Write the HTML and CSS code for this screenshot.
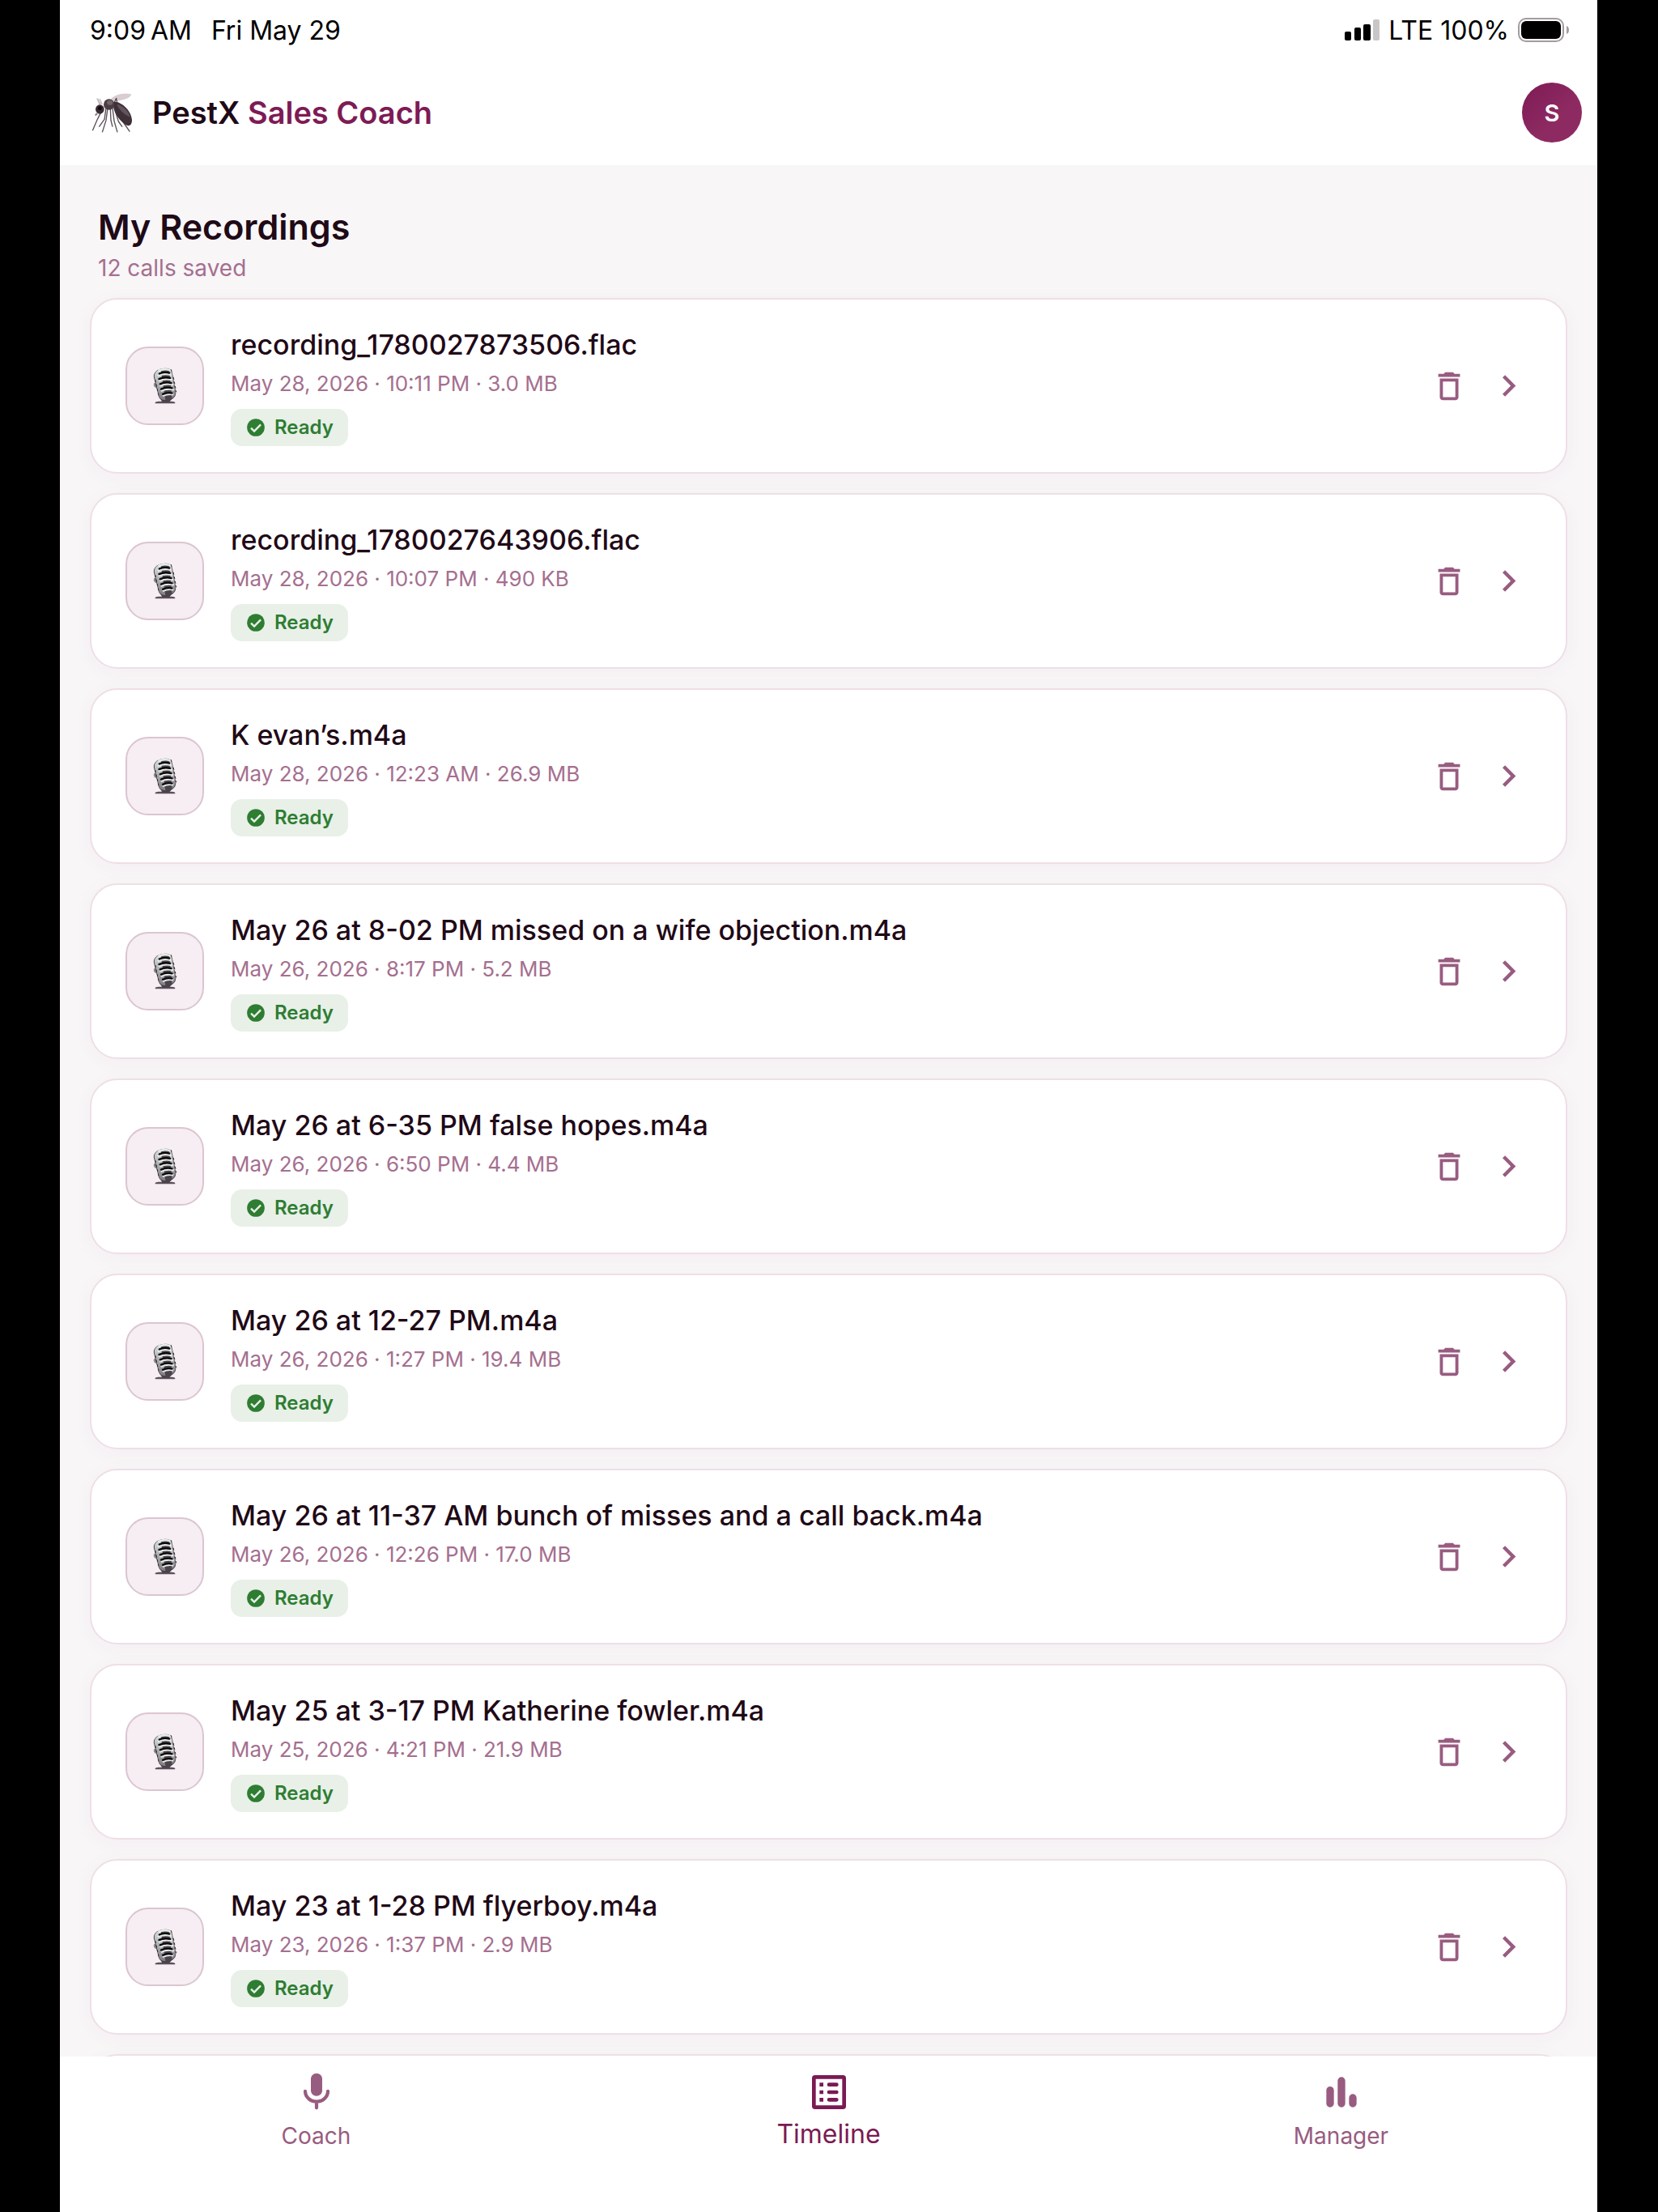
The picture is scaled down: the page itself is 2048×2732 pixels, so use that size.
FILE: index.html
```html
<!DOCTYPE html>
<html lang="en">
  <head>
    <meta charset="UTF-8" />
    <meta name="viewport" content="width=device-width, initial-scale=1.0" />
    <title>PestX Sales Coach</title>
    <link rel="stylesheet" href="styles.css">
  </head>
  <body>
    <!-- shared icons -->
    <svg class="sprite" aria-hidden="true">
      <linearGradient id="metal" x1="0" y1="0" x2="0" y2="1">
        <stop offset="0" stop-color="#d6dfdb" />
        <stop offset="1" stop-color="#817c84" />
      </linearGradient>
      <symbol id="icon-studio-mic" viewBox="0 0 90 140">
        <path d="M8 132q0-5 12-5h50q12 0 12 5v3H8z" fill="#5c4f59" />
        <path d="M24 110l10 20h26l14-16z" fill="#4b434a" />
        <path d="M4 58q-5 8 2 16l12 6-2-24z" fill="#8b8a8e" />
        <path d="M2 36C0 14 22 2 46 2q22 0 26 18l13 70c3 18-10 32-32 35-20 2-31-6-34-22z" fill="#4a434a" />
        <path d="M5 36C3 18 18 7 28 6l18 116c-16 0-23-8-25-20z" fill="url(#metal)" />
        <path d="M60 5q8 4 10 16l13 69c2 12-4 20-12 26z" fill="url(#metal)" />
        <path d="M20 13q22-12 46-2M17 31q22-12 52-4M20 50q25-12 52-4M24 69q25-12 52-4M29 88q25-12 49-4M35 106q23-10 41-5" fill="none" stroke="#e4ece7" stroke-width="8" />
        <path d="M23 23q16-9 38-3M22 43q18-9 42-4M26 62q18-9 42-4M30 81q18-9 41-4M36 100q16-8 35-4" fill="none" stroke="#0d080c" stroke-width="7" stroke-linecap="round" />
        <path d="M8 46l14 65M76 36l11 56M66 6l4 8" fill="none" stroke="#30282f" stroke-width="3" stroke-dasharray="9 8" />
      </symbol>
      <symbol id="icon-check" viewBox="0 0 24 24">
        <circle cx="12" cy="12" r="10" fill="currentColor" />
        <path d="M6.5 12.5l3.7 3.7 7.4-7.6" fill="none" stroke="#e8f0e8" stroke-width="2.2" />
      </symbol>
      <symbol id="icon-trash" viewBox="0 0 24 24">
        <path fill="currentColor" d="M6 19c0 1.100.9 2 2 2h8c1.100 0 2-.9 2-2V7H6v12zM8 9h8v10H8V9zm7.500-5l-1-1h-5l-1 1H5v2h14V4z" />
      </symbol>
      <symbol id="icon-chevron" viewBox="0 0 24 24">
        <path fill="currentColor" d="M10 6L8.590 7.410 13.170 12l-4.580 4.590L10 18l6-6z" />
      </symbol>
    </svg>

    <div class="app">
      <div class="status-bar">
        <div class="status-left">
          <span>9:09&thinsp;AM</span>
          <span>Fri May 29</span>
        </div>
        <div class="status-right">
          <svg class="signal" viewBox="0 0 43 26" aria-hidden="true">
            <rect x="0" y="15" width="8" height="11" rx="2" />
            <rect x="12" y="10" width="8" height="16" rx="2" />
            <rect x="23" y="6" width="9" height="20" rx="2" />
            <rect x="35" y="0" width="8" height="26" rx="2" fill="#c9c6c8" />
          </svg>
          <span>LTE 100%</span>
          <svg class="battery" viewBox="0 0 64 30" aria-hidden="true">
            <rect x="1" y="1" width="55" height="28" rx="9" fill="none" stroke="#a39ca0" stroke-width="2" />
            <rect x="4" y="4" width="49" height="22" rx="6" />
            <path d="M60 10q3 1 3 5t-3 5z" fill="#a39ca0" />
          </svg>
        </div>
      </div>

      <header class="header">
        <svg class="logo" viewBox="38 72 153 150" role="img" aria-label="Mosquito">
          <path d="M104 104C120 78 160 72 186 79c-2 16-38 26-66 25z" fill="#d9cdd3" />
          <path d="M66 118L56 94l8 2 10 20zM74 116l-8-22 6 4 8 20z" fill="#c6bcc1" />
          <g fill="none" stroke="#5b4d55" stroke-width="4" stroke-linejoin="round">
            <path d="M72 148L60 172 42 214" />
            <path d="M92 130L86 172 66 200" />
            <path d="M98 130L92 176 78 220" />
            <path d="M108 132l2 44 6 24" />
            <path d="M116 130l6 48 12 42" />
            <path d="M122 128l16 52 14 20" />
            <path d="M128 130l26 50 26 38" />
            <path d="M122 112l8-18 4 24" />
          </g>
          <path d="M118 108c26-6 68 30 70 66 0 24-14 26-28 15-24-18-44-50-42-81z" fill="#3d3037" />
          <path d="M132 116c18 2 44 24 50 48-20-8-42-26-50-48z" fill="#63535c" />
          <ellipse cx="103" cy="117" rx="20" ry="20" fill="#4a3d44" />
          <ellipse cx="106" cy="110" rx="11" ry="9" fill="#73646c" />
          <ellipse cx="69" cy="135" rx="16" ry="17" fill="#372b32" />
          <circle cx="69" cy="131" r="7" fill="#15090f" />
          <path d="M56 148l-6 8 4 4 8-8z" fill="#8f8189" />
        </svg>
        <h1 class="brand">PestX <span class="brand-accent">Sales Coach</span></h1>
        <button type="button" class="avatar" aria-label="Account">S</button>
      </header>

      <main class="content">
        <div class="page-title">
          <h2>My Recordings</h2>
          <p>12 calls saved</p>
        </div>
        <ul class="recordings" id="recordings"></ul>
      </main>

      <nav class="tab-bar">
        <a href="#coach" class="tab">
          <svg viewBox="0 0 24 24" aria-hidden="true">
            <path fill="currentColor" d="M12 14c1.660 0 3-1.340 3-3V5c0-1.660-1.340-3-3-3S9 3.340 9 5v6c0 1.660 1.340 3 3 3z" />
            <path d="M6 11.500a6 5.500 0 0 0 12 0M12 17v3.300" fill="none" stroke="currentColor" stroke-width="1.800" stroke-linecap="round" />
          </svg>
          <span>Coach</span>
        </a>
        <a href="#timeline" class="tab active">
          <svg viewBox="0 0 24 24" aria-hidden="true">
            <rect x="4" y="4" width="16" height="16" rx=".6" fill="none" stroke="currentColor" stroke-width="2" />
            <path d="M7 8h2M7 12h2M7 16h2" stroke="currentColor" stroke-width="2" />
            <path d="M12 8h4M12 12h4M12 16h4" stroke="currentColor" stroke-width="2" stroke-linecap="round" />
          </svg>
          <span>Timeline</span>
        </a>
        <a href="#manager" class="tab">
          <svg viewBox="0 0 24 24" aria-hidden="true">
            <path d="M6 11v7M12 6v12M18 15v3" stroke="currentColor" stroke-width="4" stroke-linecap="round" />
          </svg>
          <span>Manager</span>
        </a>
      </nav>
    </div>

    <script>
      const recordings = [
        { name: "recording_1780027873506.flac", meta: "May 28, 2026 · 10:11 PM · 3.0 MB" },
        { name: "recording_1780027643906.flac", meta: "May 28, 2026 · 10:07 PM · 490 KB" },
        { name: "K evan’s.m4a", meta: "May 28, 2026 · 12:23 AM · 26.9 MB" },
        { name: "May 26 at 8-02 PM missed on a wife objection.m4a", meta: "May 26, 2026 · 8:17 PM · 5.2 MB" },
        { name: "May 26 at 6-35 PM false hopes.m4a", meta: "May 26, 2026 · 6:50 PM · 4.4 MB" },
        { name: "May 26 at 12-27 PM.m4a", meta: "May 26, 2026 · 1:27 PM · 19.4 MB" },
        { name: "May 26 at 11-37 AM bunch of misses and a call back.m4a", meta: "May 26, 2026 · 12:26 PM · 17.0 MB" },
        { name: "May 25 at 3-17 PM Katherine fowler.m4a", meta: "May 25, 2026 · 4:21 PM · 21.9 MB" },
        { name: "May 23 at 1-28 PM flyerboy.m4a", meta: "May 23, 2026 · 1:37 PM · 2.9 MB" },
      ];

      const list = document.getElementById("recordings");

      list.innerHTML = recordings
        .map(
          (rec) => `
          <li class="card">
            <div class="thumb"><svg aria-hidden="true"><use href="#icon-studio-mic" /></svg></div>
            <div class="info">
              <h3>${rec.name}</h3>
              <p>${rec.meta}</p>
              <span class="badge"><svg aria-hidden="true"><use href="#icon-check" /></svg>Ready</span>
            </div>
            <button type="button" class="btn-delete" aria-label="Delete"><svg aria-hidden="true"><use href="#icon-trash" /></svg></button>
            <a href="#recording" class="btn-open" aria-label="Open"><svg aria-hidden="true"><use href="#icon-chevron" /></svg></a>
          </li>`
        )
        .join("");

      list.insertAdjacentHTML("beforeend", '<li class="card"></li>');
    </script>
  </body>
</html>
```
FILE: styles.css
```css
* {
  margin: 0;
  padding: 0;
  box-sizing: border-box;
}

body {
  font-family: Inter, Roboto, "Liberation Sans", sans-serif;
  background: #000;
  color: #1f0a17;
  height: 100vh;
  padding: 0 75px 0 74px;
  overflow: hidden;
}

svg {
  display: block;
  flex-shrink: 0;
}

button {
  border: none;
  background: none;
  font-family: inherit;
  cursor: pointer;
}

a {
  color: inherit;
  text-decoration: none;
}

.sprite {
  position: absolute;
  width: 0;
  height: 0;
}

.app {
  display: flex;
  flex-direction: column;
  height: 100%;
  background: #f8f6f7;
}

/* status bar */
.status-bar {
  display: flex;
  justify-content: space-between;
  align-items: center;
  height: 74px;
  padding: 0 34px 0 37px;
  background: #fff;
  color: #000;
  font-size: 32px;
}

.status-left {
  display: flex;
  gap: 24px;
}

.status-right {
  display: flex;
  align-items: center;
  gap: 11px;
}

.signal {
  width: 43px;
  height: 26px;
}

.battery {
  width: 64px;
  height: 30px;
}

/* header */
.header {
  display: flex;
  align-items: center;
  height: 130px;
  padding: 0 19px 0 39px;
  background: #fff;
}

.logo {
  width: 51px;
  height: 50px;
}

.brand {
  flex: 1;
  margin-left: 24px;
  font-size: 38px;
  line-height: 46px;
  font-weight: 600;
}

.brand-accent {
  color: #7d1b55;
}

.avatar {
  width: 74px;
  height: 74px;
  border-radius: 50%;
  background: linear-gradient(135deg, #7d1b55 0%, #8e2a62 60%);
  color: #fff;
  font-size: 29px;
  font-weight: 600;
}

/* recordings */
.content {
  flex: 1;
  min-height: 0;
  overflow: hidden;
  padding: 48px 37px 0;
}

.page-title {
  padding: 0 10px;
  margin-bottom: 14px;
}

.page-title h2 {
  font-size: 43px;
  line-height: 56px;
  font-weight: 600;
}

.page-title p {
  font-size: 28px;
  line-height: 46px;
  color: #a56f8f;
}

.recordings {
  display: flex;
  flex-direction: column;
  gap: 24px;
  list-style: none;
}

.card {
  display: flex;
  align-items: center;
  min-height: 217px;
  flex-shrink: 0;
  padding: 0 44px 0 42px;
  background: #fff;
  border: 2px solid #eedfe7;
  border-radius: 34px;
  box-shadow: 0 4px 24px rgba(160, 30, 130, 0.04);
}

.thumb {
  display: flex;
  align-items: center;
  justify-content: center;
  width: 97px;
  height: 97px;
  background: #f6eef3;
  border: 2px solid #dcc5d1;
  border-radius: 28px;
}

.thumb svg {
  width: 30px;
  height: 46px;
}

.info {
  flex: 1;
  margin-left: 33px;
}

.info h3 {
  font-size: 34px;
  line-height: 46px;
  font-weight: 500;
}

.info p {
  margin-bottom: 6px;
  font-size: 26px;
  line-height: 50px;
  color: #a56f8f;
}

.badge {
  display: flex;
  align-items: center;
  gap: 10px;
  width: max-content;
  height: 46px;
  padding: 0 18px;
  background: #e8f0e8;
  border-radius: 14px;
  color: #2e7d32;
  font-size: 24px;
  font-weight: 600;
}

.badge svg {
  width: 26px;
  height: 26px;
}

.btn-delete svg {
  width: 46px;
  height: 46px;
}

.btn-delete,
.btn-open {
  color: #985c80;
}

.btn-open {
  margin-left: 24px;
}

.btn-open svg {
  width: 53px;
  height: 53px;
}

/* bottom tabs */
.tab-bar {
  display: flex;
  height: 192px;
  background: #fff;
}

.tab {
  flex: 1;
  display: flex;
  flex-direction: column;
  align-items: center;
  gap: 6px;
  padding-top: 16px;
  color: #985c80;
  font-size: 28px;
  line-height: 40px;
}

.tab svg {
  width: 56px;
  height: 56px;
}

.tab.active {
  color: #7a1a53;
  font-size: 32px;
  line-height: 36px;
}
```
